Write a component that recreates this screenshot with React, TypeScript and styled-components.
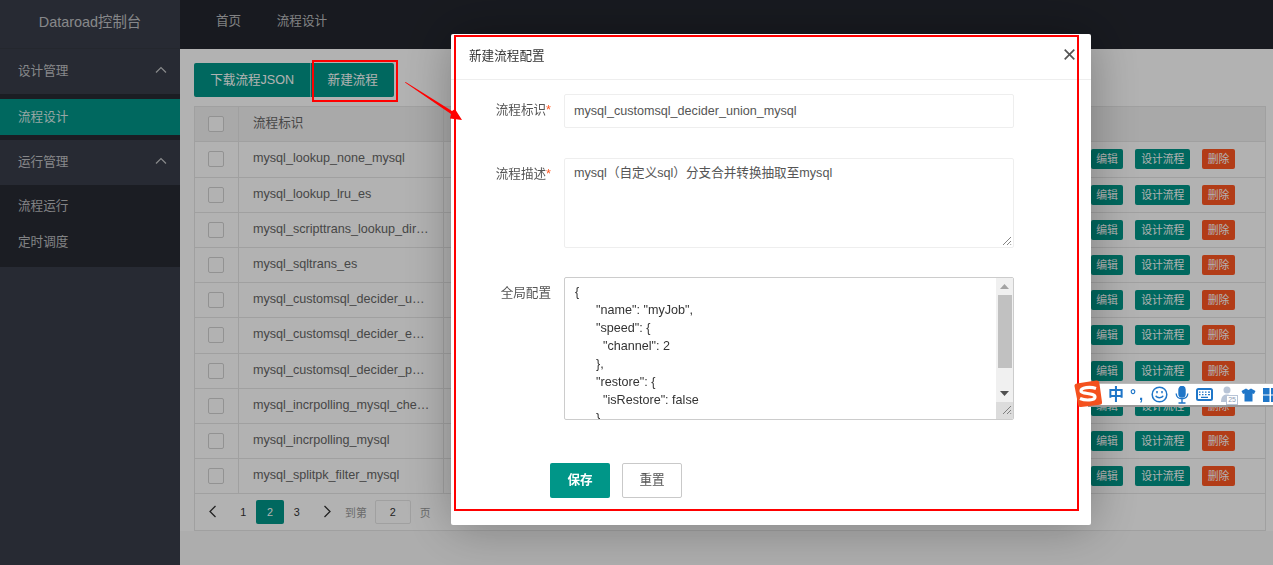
import React from "react";
import styled, { createGlobalStyle } from "styled-components";

const Global = createGlobalStyle`
  html, body { margin: 0; padding: 0; width: 100%; height: 100%; overflow: hidden; background: #fff; }
  * { box-sizing: border-box; }
  body { font-family: "Liberation Sans", "Noto Sans CJK SC", sans-serif; font-size: 12.6px; color: #666; }
`;

const Page = styled.div`
  display: grid;
  grid-template-columns: 180px 1fr;
  width: 1273px;
  height: 565px;
  overflow: hidden;
`;
const Sidebar = styled.aside`
  background: #393d49;
  display: flex;
  flex-direction: column;
`;
const Logo = styled.div`
  height: 49px;
  line-height: 45px;
  text-align: center;
  font-size: 14.4px;
  color: rgba(255, 255, 255, 0.7);
  border-bottom: 1px solid rgba(0, 0, 0, 0.08);
`;
const GroupTitle = styled.div`
  height: 45px;
  padding: 0 13px 4px 18px;
  display: flex;
  align-items: center;
  justify-content: space-between;
  color: rgba(255, 255, 255, 0.7);
`;
const SubList = styled.div<{ $top: number; $bottom: number }>`
  background: rgba(0, 0, 0, 0.3);
  padding: ${(p) => p.$top}px 0 ${(p) => p.$bottom}px;
`;
const SubItem = styled.div<{ $active?: boolean }>`
  height: 36px;
  line-height: 36px;
  padding-left: 18px;
  color: ${(p) => (p.$active ? "rgba(255,255,255,.85)" : "rgba(255,255,255,.7)")};
  background: ${(p) => (p.$active ? "#009688" : "transparent")};
`;
const Main = styled.div`
  display: flex;
  flex-direction: column;
  min-width: 0;
  background: #f8f8f8;
`;
const TopBar = styled.header`
  flex: 0 0 49px;
  background: #23262e;
  display: flex;
  align-items: center;
  padding: 0 0 10px 36px;
  gap: 35.5px;
  color: rgba(255, 255, 255, 0.7);
`;
const Content = styled.main`
  flex: 0 0 481px;
  background: #fff;
  padding: 14px 7px 0 14px;
`;
const Toolbar = styled.div`
  display: flex;
  height: 34.2px;
  margin-bottom: 9px;
`;
const ToolButton = styled.div<{ $divider?: boolean }>`
  height: 34.2px;
  line-height: 34.2px;
  padding: 0 16.2px;
  background: #009688;
  color: #fff;
  border-radius: ${(p) => (p.$divider ? "0 2px 2px 0" : "2px 0 0 2px")};
  border-left: ${(p) => (p.$divider ? "1px solid rgba(255,255,255,.5)" : "0")};
`;
const Table = styled.div`
  border: 1px solid #e6e6e6;
`;
const Row = styled.div<{ $head?: boolean }>`
  display: flex;
  align-items: stretch;
  height: 35.2px;
  border-bottom: 1px solid #e6e6e6;
  background: ${(p) => (p.$head ? "#f2f2f2" : "#fff")};
`;
const CheckCell = styled.div`
  flex: 0 0 44px;
  display: flex;
  align-items: center;
  padding-left: 13px;
  border-right: 1px solid #e6e6e6;
`;
const Check = styled.span`
  width: 16px;
  height: 16px;
  background: #fff;
  border: 1px solid #d2d2d2;
  border-radius: 2px;
`;
const NameCell = styled.div`
  flex: 0 0 205px;
  padding: 0 13px 0 14px;
  line-height: 32.5px;
  white-space: nowrap;
  overflow: hidden;
  text-overflow: ellipsis;
  border-right: 1px solid #e6e6e6;
`;
const Ops = styled.div`
  flex: 1;
  display: flex;
  justify-content: flex-end;
  align-items: center;
  gap: 12px;
  padding-right: 30px;
`;
const OpButton = styled.span<{ $danger?: boolean }>`
  height: 20px;
  line-height: 20px;
  padding: 0 5.7px;
  font-size: 10.8px;
  color: #fff;
  border-radius: 2px;
  background: ${(p) => (p.$danger ? "#ff5722" : "#009688")};
`;
const Pager = styled.div`
  height: 36px;
  display: flex;
  align-items: center;
  padding: 0 0 1px 9px;
  font-size: 10.8px;
`;
const PagerArrow = styled.span<{ $next?: boolean }>`
  width: 16px;
  height: 24px;
  margin: ${(p) => (p.$next ? "0 0 0 9px" : "0 10px 0 0")};
  display: flex;
  align-items: center;
  justify-content: center;
  color: #333;
`;
const PageNum = styled.span<{ $active?: boolean }>`
  height: 24px;
  line-height: 24px;
  text-align: center;
  width: ${(p) => (p.$active ? "28px" : "26.7px")};
  margin: ${(p) => (p.$active ? "0 -0.65px" : "0")};
  color: ${(p) => (p.$active ? "#fff" : "#333")};
  background: ${(p) => (p.$active ? "#009688" : "transparent")};
  border-radius: 2px;
  position: relative;
`;
const PagerText = styled.span<{ $ml: number }>`
  margin-left: ${(p) => p.$ml}px;
  color: #999;
`;
const PagerInput = styled.span`
  width: 36px;
  height: 24px;
  line-height: 22px;
  margin-left: 8px;
  text-align: center;
  color: #333;
  border: 1px solid #e6e6e6;
  border-radius: 2px;
`;
const Shade = styled.div`
  position: fixed;
  inset: 0;
  background: rgba(0, 0, 0, 0.3);
`;
const Modal = styled.section`
  position: fixed;
  left: 451px;
  top: 34px;
  width: 640px;
  height: 491px;
  background: #fff;
  border-radius: 2px;
  box-shadow: 1px 1px 50px rgba(0, 0, 0, 0.3);
`;
const ModalHead = styled.div`
  height: 46px;
  padding: 0 16px 5px 18px;
  display: flex;
  align-items: center;
  justify-content: space-between;
  color: #333;
  border-bottom: 1px solid #eee;
`;
const Form = styled.div`
  padding-top: 14px;
  display: flex;
  flex-direction: column;
`;
const FormRow = styled.div<{ $mb: number }>`
  display: flex;
  gap: 13px;
  margin-bottom: ${(p) => p.$mb}px;
`;
const Label = styled.label`
  width: 100px;
  text-align: right;
  line-height: 33px;
  color: #555;
`;
const Star = styled.span`
  color: #ff5722;
`;
const TextField = styled.div<{ $h: number }>`
  position: relative;
  width: 450px;
  height: ${(p) => p.$h}px;
  padding: ${(p) => (p.$h < 40 ? "0 9px" : "5px 9px")};
  line-height: ${(p) => (p.$h < 40 ? "32px" : "18px")};
  color: #555;
  border: 1px solid #eee;
  border-radius: 2px;
  background: #fff;
`;
const Resizer = styled.svg`
  position: absolute;
  right: 1px;
  bottom: 1px;
`;
const CodeBox = styled.div`
  width: 450px;
  height: 143px;
  display: flex;
  border: 1px solid #ccc;
  border-radius: 2px;
  overflow: hidden;
`;
const Code = styled.pre`
  flex: 1;
  margin: 0;
  padding: 5px 10px;
  font: inherit;
  line-height: 18px;
  color: #333;
  overflow: hidden;
  white-space: pre;
`;
const ScrollBar = styled.div`
  flex: 0 0 17px;
  display: flex;
  flex-direction: column;
  background: #f0f0f0;
`;
const ScrollArrow = styled.div`
  flex: 0 0 17px;
  display: flex;
  align-items: center;
  justify-content: center;
`;
const ScrollTrack = styled.div`
  flex: 1;
  padding: 0 1px 0 2px;
`;
const ScrollThumb = styled.div`
  height: 73px;
  background: #c1c1c1;
`;
const ScrollCorner = styled.div`
  position: relative;
  flex: 0 0 17px;
  background: #dcdcdc;
`;
const Actions = styled.div`
  display: flex;
  gap: 12px;
  padding-left: 99px;
`;
const SaveButton = styled.div`
  width: 60px;
  height: 35px;
  line-height: 35px;
  text-align: center;
  color: #fff;
  font-weight: bold;
  background: #009688;
  border-radius: 2px;
`;
const ResetButton = styled.div`
  width: 60px;
  height: 35px;
  line-height: 33px;
  text-align: center;
  color: #555;
  background: #fff;
  border: 1px solid #c9c9c9;
  border-radius: 2px;
`;
const Mark = styled.div<{ $l: number; $t: number; $w: number; $h: number }>`
  position: fixed;
  left: ${(p) => p.$l}px;
  top: ${(p) => p.$t}px;
  width: ${(p) => p.$w}px;
  height: ${(p) => p.$h}px;
  border: 2px solid #f00;
  pointer-events: none;
`;
const Arrow = styled.svg`
  position: fixed;
  left: 400px;
  top: 76px;
`;
const ImeBar = styled.div`
  position: fixed;
  left: 1088px;
  top: 383px;
  right: 0;
  height: 24px;
  display: flex;
  align-items: center;
  padding-left: 20px;
  background: #fff;
  border-top: 1px solid #bbb;
  border-bottom: 2px solid #999;
  color: #1f76c8;
  overflow: hidden;
`;
const ImeLogo = styled.svg`
  position: fixed;
  left: 1074px;
  top: 380px;
`;
const ImeGlyph = styled.span`
  font-size: 16px;
  font-weight: bold;
  line-height: 20px;
  margin-right: 6px;
`;
const ImePunct = styled.span`
  font-size: 15px;
  font-weight: bold;
  line-height: 20px;
  width: 14px;
  margin-right: 7px;
  letter-spacing: 3px;
  white-space: nowrap;
`;
const ImeIcon = styled.svg<{ $mr: number }>`
  flex: none;
  margin-right: ${(p) => p.$mr}px;
`;
const ImeUser = styled.span`
  position: relative;
  width: 17px;
  height: 20px;
  flex: 0 0 17px;
  margin-right: 4px;
`;
const ImeCount = styled.span`
  position: absolute;
  right: -1px;
  bottom: 0;
  font-size: 7px;
  line-height: 8px;
  padding: 0 1px;
  color: #8c9db5;
  background: #fff;
  border: 1px solid #b8c4d6;
`;

const names = [
  "mysql_lookup_none_mysql",
  "mysql_lookup_lru_es",
  "mysql_scripttrans_lookup_direct_es",
  "mysql_sqltrans_es",
  "mysql_customsql_decider_union_mysql",
  "mysql_customsql_decider_es_mysql",
  "mysql_customsql_decider_pg_mysql",
  "mysql_incrpolling_mysql_checkpoint",
  "mysql_incrpolling_mysql",
  "mysql_splitpk_filter_mysql",
];

const code = `{
      "name": "myJob",
      "speed": {
        "channel": 2
      },
      "restore": {
        "isRestore": false
      }`;

const ChevronUp = () => (
  <svg width="12" height="8" viewBox="0 0 12 8" fill="none" stroke="currentColor" strokeWidth="1.2">
    <path d="M1 6.5 6 1.5l5 5" />
  </svg>
);

const Grip = () => (
  <svg width="11" height="11" viewBox="0 0 11 11" stroke="#666" strokeWidth="0.8">
    <path d="M2 10 10 2M6 10l4-4M9.2 10l.8-.8" />
  </svg>
);

export default function App() {
  return (
    <>
      <Global />
      <Page>
        <Sidebar>
          <Logo>Dataroad控制台</Logo>
          <GroupTitle>设计管理<ChevronUp /></GroupTitle>
          <SubList $top={5} $bottom={5}><SubItem $active>流程设计</SubItem></SubList>
          <GroupTitle>运行管理<ChevronUp /></GroupTitle>
          <SubList $top={3} $bottom={7}>
            <SubItem>流程运行</SubItem>
            <SubItem>定时调度</SubItem>
          </SubList>
        </Sidebar>
        <Main>
          <TopBar>
            <span>首页</span>
            <span>流程设计</span>
          </TopBar>
          <Content>
            <Toolbar>
              <ToolButton>下载流程JSON</ToolButton>
              <ToolButton $divider>新建流程</ToolButton>
            </Toolbar>
            <Table>
              <Row $head>
                <CheckCell><Check /></CheckCell>
                <NameCell>流程标识</NameCell>
              </Row>
              {names.map((n) => (
                <Row key={n}>
                  <CheckCell><Check /></CheckCell>
                  <NameCell>{n}</NameCell>
                  <Ops>
                    <OpButton>编辑</OpButton>
                    <OpButton>设计流程</OpButton>
                    <OpButton $danger>删除</OpButton>
                  </Ops>
                </Row>
              ))}
              <Pager>
                <PagerArrow>
                  <svg width="9" height="13" viewBox="0 0 9 13" fill="none" stroke="currentColor" strokeWidth="1.3"><path d="M7.5 1 2 6.5 7.5 12" /></svg>
                </PagerArrow>
                <PageNum>1</PageNum>
                <PageNum $active>2</PageNum>
                <PageNum>3</PageNum>
                <PagerArrow $next>
                  <svg width="9" height="13" viewBox="0 0 9 13" fill="none" stroke="currentColor" strokeWidth="1.3"><path d="M1.5 1 7 6.5 1.5 12" /></svg>
                </PagerArrow>
                <PagerText $ml={10}>到第</PagerText>
                <PagerInput>2</PagerInput>
                <PagerText $ml={9}>页</PagerText>
              </Pager>
            </Table>
          </Content>
        </Main>
      </Page>
      <Shade />
      <Modal>
        <ModalHead>
          新建流程配置
          <svg width="11" height="11" viewBox="0 0 11 11" stroke="#555" strokeWidth="1.7" fill="none">
            <path d="M.7.7l9.600 9.600M10.300.7.700 10.300" />
          </svg>
        </ModalHead>
        <Form>
          <FormRow $mb={30}>
            <Label>流程标识<Star>*</Star></Label>
            <TextField $h={34}>mysql_customsql_decider_union_mysql</TextField>
          </FormRow>
          <FormRow $mb={29}>
            <Label>流程描述<Star>*</Star></Label>
            <TextField $h={90}>
              mysql（自定义sql）分支合并转换抽取至mysql
              <Resizer width="11" height="11" viewBox="0 0 11 11" stroke="#666" strokeWidth="0.8">
                <path d="M2 10 10 2M6 10l4-4M9.2 10l.8-.8" />
              </Resizer>
            </TextField>
          </FormRow>
          <FormRow $mb={43}>
            <Label>全局配置</Label>
            <CodeBox>
              <Code>{code}</Code>
              <ScrollBar>
                <ScrollArrow>
                  <svg width="9" height="5" viewBox="0 0 9 5"><path d="M4.500 0 9 5H0z" fill="#a3a3a3" /></svg>
                </ScrollArrow>
                <ScrollTrack><ScrollThumb /></ScrollTrack>
                <ScrollArrow>
                  <svg width="9" height="5" viewBox="0 0 9 5"><path d="M0 0h9L4.500 5z" fill="#505050" /></svg>
                </ScrollArrow>
                <ScrollCorner>
                  <Resizer as="span"><Grip /></Resizer>
                </ScrollCorner>
              </ScrollBar>
            </CodeBox>
          </FormRow>
          <Actions>
            <SaveButton>保存</SaveButton>
            <ResetButton>重置</ResetButton>
          </Actions>
        </Form>
      </Modal>
      <Mark $l={312} $t={60} $w={86} $h={42} />
      <Mark $l={454} $t={35} $w={625} $h={476} />
      <Arrow width="66" height="48" viewBox="0 0 66 48">
        <path d="M5 6.500 5.600 6 52 35 55 33 62 44 50 42.500 51 38z" fill="#f00" />
      </Arrow>
      <ImeBar>
        <ImeGlyph>中</ImeGlyph>
        <ImePunct>°,</ImePunct>
        <ImeIcon $mr={7} width="17" height="17" viewBox="0 0 17 17" fill="none" stroke="#1f76c8" strokeWidth="1.500">
          <circle cx="8.500" cy="8.500" r="7.300" />
          <path d="M4.800 9.800c1 2.600 6.400 2.600 7.400 0" />
          <path d="M6 5v2.200M11 5v2.200" />
        </ImeIcon>
        <ImeIcon $mr={7} width="14" height="18" viewBox="0 0 14 18" fill="none" stroke="#1f76c8" strokeWidth="1.400">
          <rect x="4" y="0.500" width="6" height="10.500" rx="3" fill="#1f76c8" />
          <path d="M1.200 7.500c0 7 11.600 7 11.600 0M7 13.500V17M3.500 17h7" />
        </ImeIcon>
        <ImeIcon $mr={7} width="17" height="13" viewBox="0 0 17 13" fill="none">
          <rect x="1" y="1" width="15" height="11" rx="1.500" stroke="#1f76c8" strokeWidth="2" />
          <path d="M3 4.200h1.500M6 4.200h1.500M9 4.200h1.500M12 4.200h2M3 6.700h1.500M6 6.700h1.500M9 6.700h1.500M12 6.700h2M5 9.300h7" stroke="#1f76c8" strokeWidth="1.300" />
        </ImeIcon>
        <ImeUser>
          <svg width="17" height="20" viewBox="0 0 17 20">
            <circle cx="7" cy="5" r="3.500" fill="#b8c4d6" />
            <path d="M1 17c0-6 3-7.500 6-7.500S12 11 12 17z" fill="#b8c4d6" />
          </svg>
          <ImeCount>25</ImeCount>
        </ImeUser>
        <ImeIcon $mr={7} width="15" height="14" viewBox="0 0 15 14">
          <path d="M5 0.500 7.500 2 10 0.500l4.500 2.500-1.500 3-1.500-.5V13.500h-8V5.500L2 6 0.500 3z" fill="#1f76c8" />
        </ImeIcon>
        <ImeIcon $mr={0} width="16" height="14" viewBox="0 0 16 14" fill="#1f76c8">
          <rect x="0" y="0" width="6.500" height="6.500" />
          <rect x="8" y="0" width="6.500" height="6.500" />
          <rect x="0" y="7.500" width="6.500" height="6.500" />
          <rect x="8" y="7.500" width="6.500" height="6.500" />
        </ImeIcon>
      </ImeBar>
      <ImeLogo width="28" height="27" viewBox="0 0 28 27">
        <path d="M3 3.500 22 0.500c2-.3 3 .5 3.300 2L28 22c.2 1.500-.5 2.500-2 2.800L7 27c-1.500.2-2.500-.5-2.800-2L0.500 6c-.2-1.200.8-2.300 2.500-2.500z" fill="#f4511e" />
        <path d="M22 8.500C16 6.500 7 7.500 7 11c0 3.500 14 1.500 14 6 0 3.500-9.500 3.800-15 1.500" fill="none" stroke="#fff" strokeWidth="3.200" />
      </ImeLogo>
    </>
  );
}
